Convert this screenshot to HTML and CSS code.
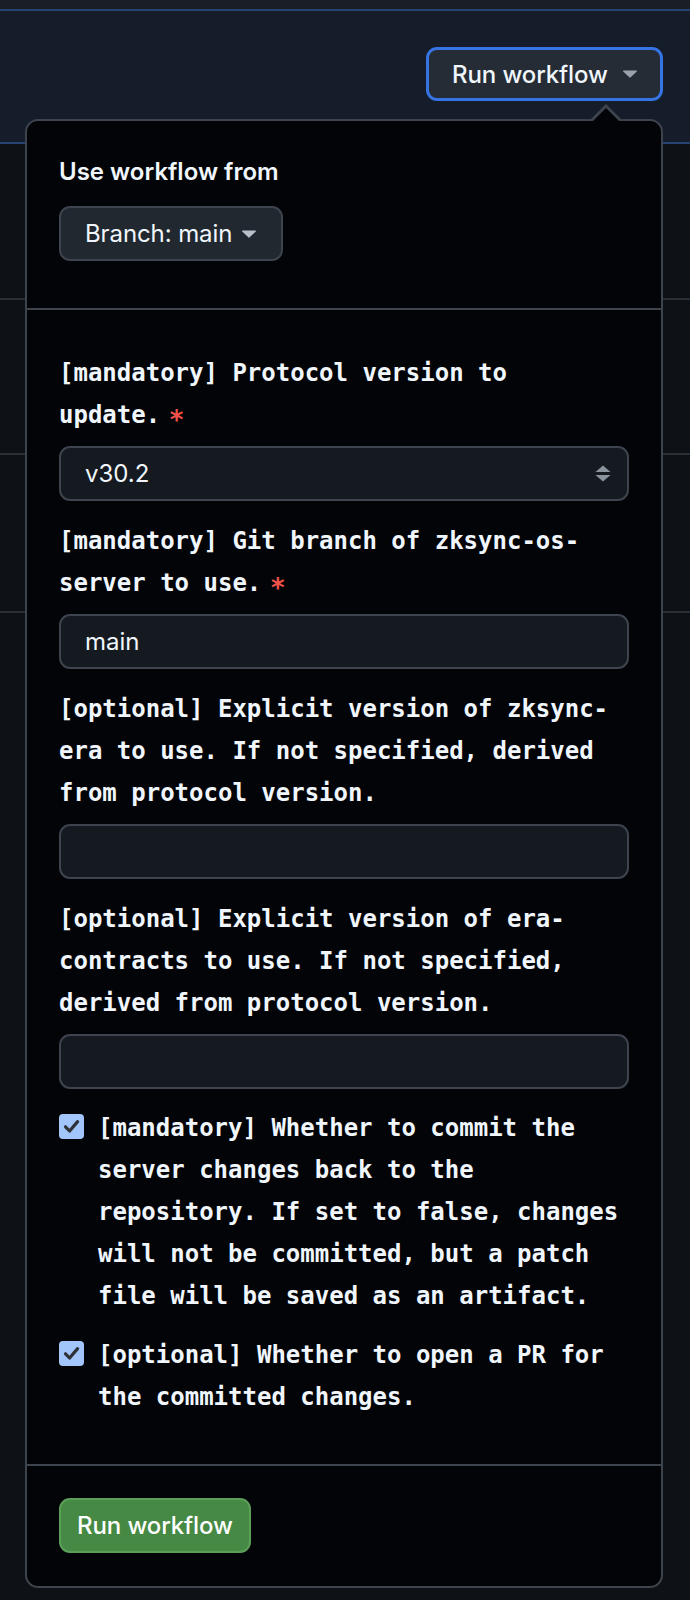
FILE: index.html
```html
<!DOCTYPE html>
<html lang="en">
<head>
<meta charset="utf-8">
<title>Run workflow</title>
<link rel="stylesheet" href="styles.css">
</head>
<body>
<div class="page">
  <div class="topbar"></div>
  <div class="band">
    <button class="btn btn-header">Run workflow
      <svg class="caret caret-grey" width="14" height="8" viewBox="0 0 14 8"><path d="M0.6 0.4h12.8c0.5 0 0.8 0.6 0.4 1L7.4 7.5a0.6 0.6 0 0 1-0.8 0L0.2 1.4c-0.4-0.4-0.1-1 0.4-1z"/></svg>
    </button>
  </div>
  <div class="row row-a"></div>
  <div class="row row-b"></div>
  <div class="row row-c"></div>
</div>

<div class="popover">
  <div class="pop-head">
    <div class="pop-title">Use workflow from</div>
    <button class="btn btn-branch">Branch: main
      <svg class="caret caret-light" width="14" height="8" viewBox="0 0 14 8"><path d="M0.6 0.4h12.8c0.5 0 0.8 0.6 0.4 1L7.4 7.5a0.6 0.6 0 0 1-0.8 0L0.2 1.4c-0.4-0.4-0.1-1 0.4-1z"/></svg>
    </button>
  </div>

  <div class="pop-form">
    <div class="group">
      <label class="mono-label">[mandatory] Protocol version to update.<span class="req">&nbsp;*</span></label>
      <div class="select-wrap">
        <div class="field select-field">v30.2</div>
        <svg class="updown" width="16" height="17" viewBox="0 0 16 17"><path d="M8 0.5 15.5 7H0.5z"/><path d="M0.5 10H15.5L8 16.5z"/></svg>
      </div>
    </div>
    <div class="group">
      <label class="mono-label">[mandatory] Git branch of zksync-os-server to use.<span class="req">&nbsp;*</span></label>
      <input class="field" type="text" value="main">
    </div>
    <div class="group">
      <label class="mono-label">[optional] Explicit version of zksync-era to use. If not specified, derived from protocol version.</label>
      <input class="field" type="text" value="">
    </div>
    <div class="group">
      <label class="mono-label">[optional] Explicit version of era-contracts to use. If not specified, derived from protocol version.</label>
      <input class="field" type="text" value="">
    </div>
    <div class="check-row check-first">
      <span class="checkbox"><svg width="25" height="25" viewBox="0 0 25 25"><path d="M6.5 12.8 10.6 17 18.6 7.6" fill="none" stroke="#2f3238" stroke-width="3.2" stroke-linecap="round" stroke-linejoin="round"/></svg></span>
      <span class="mono-label check-text">[mandatory] Whether to commit the server changes back to the repository. If set to false, changes will not be committed, but a patch file will be saved as an artifact.</span>
    </div>
    <div class="check-row">
      <span class="checkbox"><svg width="25" height="25" viewBox="0 0 25 25"><path d="M6.5 12.8 10.6 17 18.6 7.6" fill="none" stroke="#2f3238" stroke-width="3.2" stroke-linecap="round" stroke-linejoin="round"/></svg></span>
      <span class="mono-label check-text">[optional] Whether to open a PR for the committed changes.</span>
    </div>
  </div>

  <div class="pop-foot">
    <button class="btn btn-green">Run workflow</button>
  </div>
</div>
</body>
</html>
```
FILE: styles.css
```css
* { box-sizing: border-box; }

html, body {
  margin: 0;
  padding: 0;
}

body {
  background: #0e1217;
  color: #f0f6fc;
  font-family: Inter, "Noto Sans", "Liberation Sans", sans-serif;
  width: 690px;
  height: 1600px;
  position: relative;
  overflow: hidden;
}

.topbar {
  height: 11px;
  background: #1a1e25;
  border-bottom: 2px solid #264372;
}

.band {
  height: 133px;
  background: #151c2a;
  border-bottom: 2px solid #264372;
  display: flex;
  justify-content: flex-end;
  align-items: flex-start;
  padding: 36px 27px 0 0;
}

.row {
  border-bottom: 2px solid #2a3038;
}
.row-a { height: 156px; }
.row-b { height: 155px; }
.row-c { height: 158px; }

.btn {
  font-family: Inter, "Noto Sans", "Liberation Sans", sans-serif;
  font-size: 24px;
  font-weight: 500;
  color: #f0f6fc;
  display: inline-flex;
  align-items: center;
  cursor: pointer;
  letter-spacing: -0.1px;
}

.caret { display: block; }
.caret-grey { fill: #9aa3ad; }
.caret-light { fill: #b9c0c9; }

.btn-header {
  width: 237px;
  height: 54px;
  background: #262c36;
  border: 3px solid #3574e2;
  border-radius: 11px;
  padding: 0 23px;
  justify-content: space-between;
}

.popover {
  position: absolute;
  left: 25px;
  top: 119px;
  width: 638px;
  background: #020408;
  border: 2px solid #3d444d;
  border-radius: 13px;
}

.popover::before,
.popover::after {
  content: "";
  position: absolute;
  width: 0;
  height: 0;
  border-left: 15px solid transparent;
  border-right: 15px solid transparent;
}
.popover::before {
  right: 40px;
  top: -17px;
  border-bottom: 15px solid #3d444d;
}
.popover::after {
  right: 42px;
  top: -13px;
  border-left-width: 13px;
  border-right-width: 13px;
  border-bottom: 13px solid #020408;
}

.pop-head {
  padding: 36px 32px 47px;
}

.pop-title {
  font-size: 24px;
  line-height: 30px;
  font-weight: 600;
}

.btn-branch {
  margin-top: 19px;
  width: 224px;
  height: 55px;
  background: #212830;
  border: 2px solid #3d444d;
  border-radius: 11px;
  padding: 0 23px 0 24px;
  font-weight: 400;
  gap: 10px;
}

.pop-form {
  border-top: 2px solid #3d444d;
  padding: 42px 32px 46px;
}

.group + .group { margin-top: 19px; }

.mono-label {
  display: block;
  font-family: "DejaVu Sans Mono", "Liberation Mono", monospace;
  font-weight: 700;
  font-size: 24px;
  line-height: 42px;
  color: #f0f6fc;
}

.req {
  color: #f0524a;
  font-weight: 700;
  font-size: 26px;
  line-height: 20px;
  vertical-align: -6px;
  word-spacing: -7px;
}

.field {
  display: flex;
  align-items: center;
  width: 100%;
  height: 55px;
  margin-top: 10px;
  background: #151a21;
  border: 2px solid #3d444d;
  border-radius: 11px;
  padding: 0 24px;
  color: #f0f6fc;
  font-family: Inter, "Noto Sans", "Liberation Sans", sans-serif;
  font-size: 24px;
  outline: none;
}

.select-wrap {
  position: relative;
  margin-top: 10px;
}
.select-wrap .field { margin-top: 0; }

.updown {
  position: absolute;
  right: 18px;
  top: 19px;
  fill: #8b939d;
}

.check-row {
  display: flex;
  align-items: flex-start;
  gap: 14px;
  margin-top: 17px;
}
.check-first { margin-top: 18px; }

.checkbox {
  flex: none;
  width: 25px;
  height: 25px;
  margin-top: 7px;
  background: #a2c6fb;
  border-radius: 4px;
  display: block;
}
.checkbox svg { display: block; }

.check-text { flex: 1; }

.pop-foot {
  border-top: 2px solid #3d444d;
  padding: 32px 32px 33px;
}

.btn-green {
  height: 55px;
  background: #468945;
  border: 2px solid #5c9f59;
  border-radius: 11px;
  padding: 0 16px;
  color: #ffffff;
}
```
